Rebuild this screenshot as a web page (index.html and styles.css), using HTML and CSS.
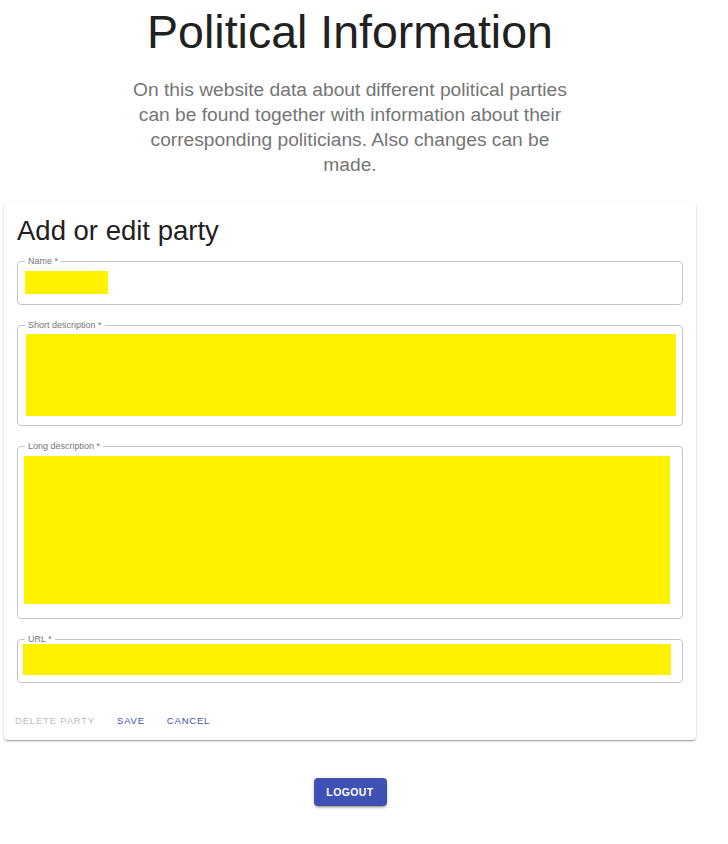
FILE: index.html
```html
<!DOCTYPE html>
<html>
<head>
<meta charset="utf-8">
<link rel="stylesheet" href="styles.css">
</head>
<body>
<div class="page">
  <header class="hero">
    <h1 class="title">Political Information</h1>
    <p class="intro">On this website data about different political parties can be found together with information about their corresponding politicians. Also changes can be made.</p>
  </header>
  <section class="card">
    <h2 class="card-title">Add or edit party</h2>
    <fieldset class="field field-name">
      <legend>Name *</legend>
      <div class="fill fill-name"></div>
    </fieldset>
    <fieldset class="field field-short">
      <legend>Short description *</legend>
      <div class="fill fill-short"></div>
    </fieldset>
    <fieldset class="field field-long">
      <legend>Long description *</legend>
      <div class="fill fill-long"></div>
    </fieldset>
    <fieldset class="field field-url">
      <legend>URL *</legend>
      <div class="fill fill-url"></div>
    </fieldset>
    <div class="actions">
      <button class="text-btn disabled">DELETE PARTY</button>
      <button class="text-btn primary">SAVE</button>
      <button class="text-btn primary">CANCEL</button>
    </div>
  </section>
  <div class="logout-row">
    <button class="logout">LOGOUT</button>
  </div>
</div>
</body>
</html>
```

FILE: styles.css
```css
html, body {
  margin: 0;
  padding: 0;
  background: #ffffff;
}
body {
  font-family: "Liberation Sans", Arial, sans-serif;
  color: #212121;
}
.page {
  width: 700px;
  padding-bottom: 30px;
}
.hero {
  display: flex;
  flex-direction: column;
  align-items: center;
  padding-top: 4px;
}
.title {
  margin: 0;
  font-size: 46.5px;
  font-weight: 400;
  line-height: 56px;
  color: #212121;
}
.intro {
  margin: 17px 0 0;
  width: 440px;
  text-align: center;
  font-size: 19.2px;
  line-height: 25px;
  color: #757575;
}
.card {
  margin: 25px 0 0 4px;
  width: 692px;
  box-sizing: border-box;
  padding: 12px 13px 7px 13px;
  background: #fff;
  border-radius: 4px;
  box-shadow: 0 1px 3px rgba(0,0,0,0.2), 0 1px 1px rgba(0,0,0,0.14), 0 2px 1px -1px rgba(0,0,0,0.12);
}
.card-title {
  margin: 0 0 8px;
  font-size: 27.5px;
  font-weight: 400;
  line-height: 34px;
  color: #212121;
}
.field {
  margin: 0 0 15px;
  padding: 0;
  border: 1px solid #c4c4c4;
  border-radius: 4px;
  min-width: 0;
}
.field legend {
  margin-left: 7px;
  padding: 0 3px;
  font-size: 9px;
  line-height: 10px;
  color: #757575;
}
.fill {
  background: #fff200;
}
.fill-name {
  margin: 5px 0 10px 7px;
  width: 83px;
  height: 23px;
}
.fill-short {
  margin: 4px 6px 9px 8px;
  height: 82px;
}
.fill-long {
  margin: 5px 12px 14px 6px;
  height: 148px;
}
.fill-url {
  margin: 0 11px 7px 5px;
  height: 31px;
}
.actions {
  display: flex;
  margin-top: 26px;
  margin-left: -13px;
}
.text-btn {
  background: none;
  border: none;
  padding: 6px 11px;
  font-family: "Liberation Sans", Arial, sans-serif;
  font-size: 9.5px;
  letter-spacing: 0.8px;
  line-height: 12px;
}
.disabled {
  color: #bdbdbd;
}
.primary {
  color: #3f51b5;
}
.logout-row {
  display: flex;
  justify-content: center;
  margin-top: 38px;
}
.logout {
  width: 73px;
  height: 28px;
  border: none;
  border-radius: 4px;
  background: #3f51b5;
  color: #fff;
  font-family: "Liberation Sans", Arial, sans-serif;
  font-weight: 700;
  font-size: 10.5px;
  letter-spacing: 0.4px;
  box-shadow: 0 3px 1px -2px rgba(0,0,0,0.2), 0 2px 2px 0 rgba(0,0,0,0.14), 0 1px 5px 0 rgba(0,0,0,0.12);
}
```
